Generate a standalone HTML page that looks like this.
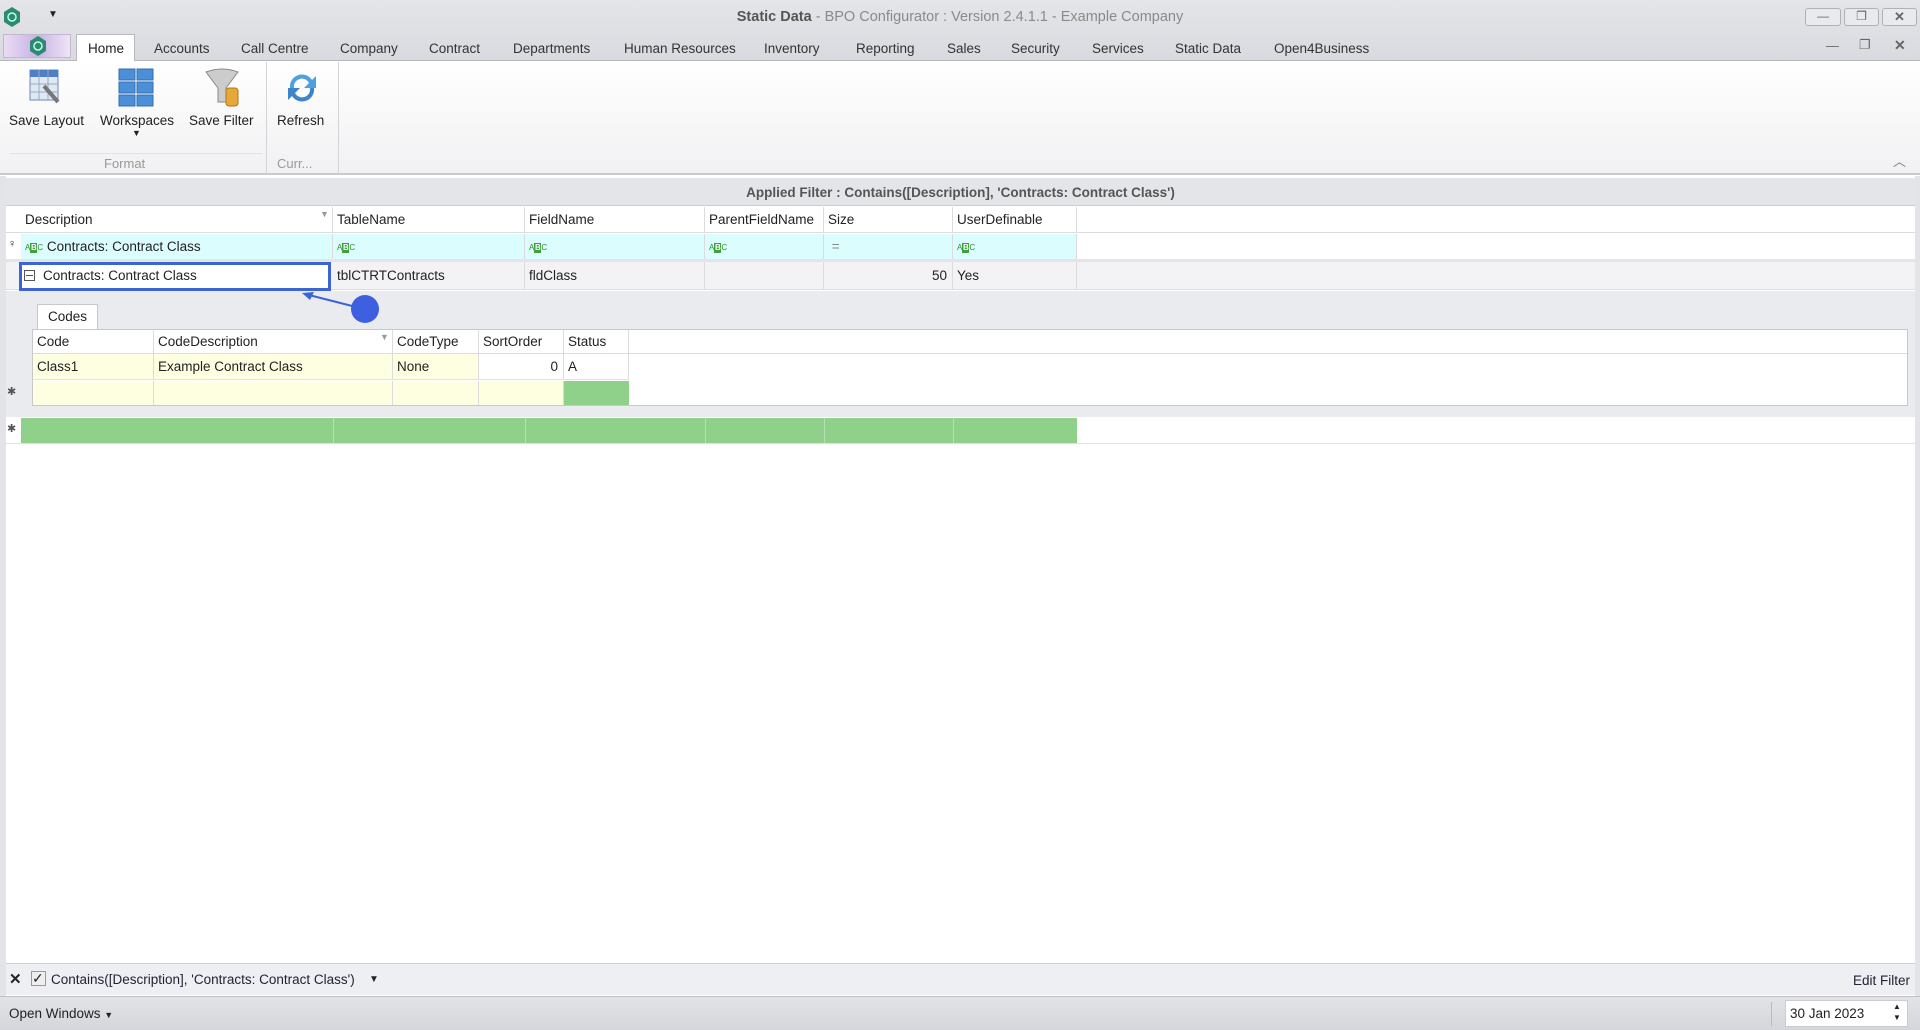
<!DOCTYPE html>
<html><head><meta charset="utf-8"><style>
*{box-sizing:border-box;margin:0;padding:0}
body{width:1920px;height:1030px;overflow:hidden;background:#fff;font-family:"Liberation Sans",sans-serif;font-size:13.5px;color:#222;position:relative}
.a{position:absolute}
.t{position:absolute;white-space:nowrap}
.cell{position:absolute;border-right:1px solid #dcdcdc;padding-left:4px;white-space:nowrap;overflow:hidden}
.abc{display:inline-block;font-size:8px;color:#2a8a2a;vertical-align:middle}
.abc b{display:inline-block;background:#3da13d;color:#fff;width:7px;height:10px;text-align:center;line-height:10px}
</style></head><body>
<div class="a" style="left:0;top:0;width:1920px;height:61px;background:linear-gradient(#e4e5e9,#d9dadf);border-bottom:1px solid #b8b9be"></div>
<svg class="a" style="left:2px;top:6px" width="20" height="22" viewBox="0 0 20 22"><polygon points="10,1 18,6 18,16 10,21 2,16 2,6" fill="#2d8a6e"/><circle cx="10" cy="11" r="4" fill="none" stroke="#bfe" stroke-width="1.5"/></svg>
<div class="t" style="left:48px;top:9px;font-size:10px">▼</div>
<div class="t" style="left:0;width:1920px;top:9px;text-align:center;font-size:14.5px;color:#8a8a8a"><b style="color:#555">Static Data</b> - BPO Configurator : Version 2.4.1.1 - Example Company</div>
<div class="a" style="left:1805px;top:8px;width:36px;height:18px;border:1px solid #b0b0b6;border-radius:3px;background:#e9eaee;text-align:center;font-size:12px;color:#666">—</div>
<div class="a" style="left:1844px;top:8px;width:35px;height:18px;border:1px solid #b0b0b6;border-radius:3px;background:#e9eaee;text-align:center;font-size:12px;color:#666">❐</div>
<div class="a" style="left:1882px;top:8px;width:35px;height:18px;border:1px solid #b0b0b6;border-radius:3px;background:#e9eaee;text-align:center;font-size:13px;font-weight:bold;color:#666">✕</div>
<div class="t" style="left:1826px;top:38px;color:#666;font-size:13px">—</div>
<div class="t" style="left:1859px;top:37px;color:#666;font-size:13px">❐</div>
<div class="t" style="left:1894px;top:37px;color:#666;font-size:14px;font-weight:bold">✕</div>
<div class="a" style="left:3px;top:34px;width:68px;height:24px;background:linear-gradient(90deg,#e9dcf3,#c9b2e6,#eee4f6);border:1px solid #c0b8cc"></div>
<svg class="a" style="left:28px;top:35px" width="20" height="22" viewBox="0 0 20 22"><polygon points="10,1 18,6 18,16 10,21 2,16 2,6" fill="#2d8a6e"/><circle cx="10" cy="11" r="4" fill="none" stroke="#bfe" stroke-width="1.5"/></svg>
<div class="a" style="left:76px;top:34px;width:59px;height:28px;background:#fff;border:1px solid #b8b9be;border-bottom:none"></div>
<div class="t" style="left:88px;top:41px">Home</div>
<div class="t" style="left:154px;top:41px;color:#333">Accounts</div>
<div class="t" style="left:241px;top:41px;color:#333">Call Centre</div>
<div class="t" style="left:340px;top:41px;color:#333">Company</div>
<div class="t" style="left:429px;top:41px;color:#333">Contract</div>
<div class="t" style="left:513px;top:41px;color:#333">Departments</div>
<div class="t" style="left:624px;top:41px;color:#333">Human Resources</div>
<div class="t" style="left:764px;top:41px;color:#333">Inventory</div>
<div class="t" style="left:856px;top:41px;color:#333">Reporting</div>
<div class="t" style="left:947px;top:41px;color:#333">Sales</div>
<div class="t" style="left:1011px;top:41px;color:#333">Security</div>
<div class="t" style="left:1092px;top:41px;color:#333">Services</div>
<div class="t" style="left:1175px;top:41px;color:#333">Static Data</div>
<div class="t" style="left:1274px;top:41px;color:#333">Open4Business</div>
<div class="a" style="left:0;top:61px;width:1920px;height:114px;background:linear-gradient(#fff,#f1f1f3);border-bottom:2px solid #c8c9ce"></div>
<div class="a" style="left:266px;top:62px;width:1px;height:112px;background:#d4d4d8"></div>
<div class="a" style="left:338px;top:62px;width:1px;height:112px;background:#d4d4d8"></div>
<svg class="a" style="left:28px;top:68px" width="38" height="40"><rect x="2" y="2" width="28" height="30" fill="#dfe8f5" stroke="#6a87b5"/><rect x="2" y="2" width="28" height="7" fill="#4f7fc4"/><line x1="11" y1="2" x2="11" y2="32" stroke="#9ab"/><line x1="20" y1="2" x2="20" y2="32" stroke="#9ab"/><line x1="2" y1="16" x2="30" y2="16" stroke="#9ab"/><line x1="2" y1="24" x2="30" y2="24" stroke="#9ab"/><path d="M16 18 l14 16" stroke="#777" stroke-width="4"/></svg>
<svg class="a" style="left:118px;top:68px" width="38" height="40"><g fill="#4d8fd6" stroke="#2f6db4"><rect x="1" y="1" width="16" height="11"/><rect x="19" y="1" width="16" height="11"/><rect x="1" y="14" width="16" height="11"/><rect x="19" y="14" width="16" height="11"/><rect x="1" y="27" width="16" height="11"/><rect x="19" y="27" width="16" height="11"/></g></svg>
<svg class="a" style="left:204px;top:68px" width="38" height="40"><path d="M2 4 Q18 -2 34 4 L22 20 L22 34 L14 34 L14 20 Z" fill="#ccc" stroke="#888"/><rect x="22" y="20" width="12" height="18" rx="3" fill="#e6a83a" stroke="#b47812"/></svg>
<svg class="a" style="left:282px;top:68px" width="40" height="40"><path d="M8 20 A12 12 0 0 1 30 12 L34 8 L34 20 L22 20 L27 15 A8 8 0 0 0 12 20 Z" fill="#4fa0e0"/><path d="M32 20 A12 12 0 0 1 10 28 L6 32 L6 20 L18 20 L13 25 A8 8 0 0 0 28 20 Z" fill="#3a86c8"/></svg>
<div class="t" style="left:9px;top:113px">Save Layout</div>
<div class="t" style="left:100px;top:113px">Workspaces</div>
<div class="t" style="left:132px;top:128px;font-size:9px">▼</div>
<div class="t" style="left:189px;top:113px">Save Filter</div>
<div class="t" style="left:277px;top:113px">Refresh</div>
<div class="a" style="left:10px;top:153px;width:252px;height:1px;background:#e2e2e6"></div>
<div class="t" style="left:104px;top:156px;color:#999;font-size:13px">Format</div>
<div class="t" style="left:277px;top:156px;color:#999;font-size:13px">Curr...</div>
<div class="t" style="left:1893px;top:151px;color:#777;font-size:13px">︿</div>
<div class="a" style="left:0;top:176px;width:6px;height:820px;background:#e3e4e8"></div>
<div class="a" style="left:1915px;top:176px;width:5px;height:820px;background:#e3e4e8"></div>
<div class="a" style="left:6px;top:178px;width:1909px;height:28px;background:#e4e5e9;border-bottom:1px solid #ccc"></div>
<div class="t" style="left:6px;width:1909px;top:185px;text-align:center;font-weight:bold;color:#555;font-size:13.5px">Applied Filter : Contains([Description], 'Contracts: Contract Class')</div>
<div class="a" style="left:6px;top:207px;width:1909px;height:26px;background:#fff;border-bottom:1px solid #dcdcdc"></div>
<div class="cell" style="left:21px;top:207px;width:312px;height:26px;line-height:26px">Description</div>
<div class="t" style="left:320px;top:209px;font-size:9px;color:#999">▼</div>
<div class="cell" style="left:333px;top:207px;width:192px;height:26px;line-height:26px">TableName</div>
<div class="cell" style="left:525px;top:207px;width:180px;height:26px;line-height:26px">FieldName</div>
<div class="cell" style="left:705px;top:207px;width:119px;height:26px;line-height:26px">ParentFieldName</div>
<div class="cell" style="left:824px;top:207px;width:129px;height:26px;line-height:26px">Size</div>
<div class="cell" style="left:953px;top:207px;width:124px;height:26px;line-height:26px">UserDefinable</div>
<div class="a" style="left:21px;top:234px;width:1056px;height:25px;background:#dcfdfd"></div>
<div class="a" style="left:6px;top:259px;width:1909px;height:3px;background:#e4e5e9"></div>
<div class="t" style="left:8px;top:238px;font-size:11px">♀</div>
<div class="cell" style="left:21px;top:234px;width:312px;height:25px;line-height:25px"><span class="abc">A<b>B</b>C</span> Contracts: Contract Class</div>
<div class="cell" style="left:333px;top:234px;width:192px;height:25px;line-height:25px"><span class="abc">A<b>B</b>C</span></div>
<div class="cell" style="left:525px;top:234px;width:180px;height:25px;line-height:25px"><span class="abc">A<b>B</b>C</span></div>
<div class="cell" style="left:705px;top:234px;width:119px;height:25px;line-height:25px"><span class="abc">A<b>B</b>C</span></div>
<div class="cell" style="left:824px;top:234px;width:129px;height:25px;line-height:25px;color:#888">&nbsp;=</div>
<div class="cell" style="left:953px;top:234px;width:124px;height:25px;line-height:25px"><span class="abc">A<b>B</b>C</span></div>
<div class="a" style="left:6px;top:262px;width:1909px;height:28px;background:#f3f3f5;border-bottom:1px solid #dcdcdc"></div>
<div class="a" style="left:19px;top:262px;width:312px;height:29px;background:#fff;border:3px solid #3c64d2"></div>
<div class="t" style="left:24px;top:270px;width:11px;height:11px;border:1px solid #555"></div>
<div class="a" style="left:26px;top:275px;width:7px;height:1px;background:#555"></div>
<div class="t" style="left:43px;top:268px">Contracts: Contract Class</div>
<div class="cell" style="left:333px;top:262px;width:192px;height:28px;line-height:28px">tblCTRTContracts</div>
<div class="cell" style="left:525px;top:262px;width:180px;height:28px;line-height:28px">fldClass</div>
<div class="cell" style="left:705px;top:262px;width:119px;height:28px"></div>
<div class="cell" style="left:824px;top:262px;width:129px;height:28px;line-height:28px;text-align:right;padding-right:5px">50</div>
<div class="cell" style="left:953px;top:262px;width:124px;height:28px;line-height:28px">Yes</div>
<div class="a" style="left:6px;top:291px;width:1909px;height:126px;background:#eaebee"></div>
<svg class="a" style="left:300px;top:288px" width="80" height="40"><line x1="5" y1="6" x2="60" y2="20" stroke="#3c64d2" stroke-width="2"/><polygon points="2,5 14,4 10,12" fill="#3c64d2"/><circle cx="65" cy="21" r="14" fill="#3d5fe0"/></svg>
<div class="a" style="left:37px;top:304px;width:61px;height:26px;background:#fff;border:1px solid #c8c8cc;border-bottom:none;text-align:center;line-height:24px">Codes</div>
<div class="a" style="left:32px;top:329px;width:1876px;height:77px;background:#fff;border:1px solid #c8c8cc"></div>
<div class="cell" style="left:33px;top:330px;width:121px;height:24px;line-height:24px;border-bottom:1px solid #dcdcdc">Code</div>
<div class="cell" style="left:154px;top:330px;width:239px;height:24px;line-height:24px;border-bottom:1px solid #dcdcdc">CodeDescription</div>
<div class="t" style="left:380px;top:332px;font-size:9px;color:#999">▼</div>
<div class="cell" style="left:393px;top:330px;width:86px;height:24px;line-height:24px;border-bottom:1px solid #dcdcdc">CodeType</div>
<div class="cell" style="left:479px;top:330px;width:85px;height:24px;line-height:24px;border-bottom:1px solid #dcdcdc">SortOrder</div>
<div class="cell" style="left:564px;top:330px;width:65px;height:24px;line-height:24px;border-bottom:1px solid #dcdcdc">Status</div>
<div class="a" style="left:629px;top:353px;width:1278px;height:1px;background:#dcdcdc"></div>
<div class="cell" style="left:33px;top:354px;width:121px;height:26px;line-height:26px;background:#fefee0;border-bottom:1px solid #e2e2e2">Class1</div>
<div class="cell" style="left:154px;top:354px;width:239px;height:26px;line-height:26px;background:#fefee0;border-bottom:1px solid #e2e2e2">Example Contract Class</div>
<div class="cell" style="left:393px;top:354px;width:86px;height:26px;line-height:26px;background:#fefee0;border-bottom:1px solid #e2e2e2">None</div>
<div class="cell" style="left:479px;top:354px;width:85px;height:26px;line-height:26px;text-align:right;padding-right:5px;border-bottom:1px solid #e2e2e2">0</div>
<div class="cell" style="left:564px;top:354px;width:65px;height:26px;line-height:26px;border-bottom:1px solid #e2e2e2">A</div>
<div class="cell" style="left:33px;top:381px;width:121px;height:24px;background:#fefee0"></div>
<div class="cell" style="left:154px;top:381px;width:239px;height:24px;background:#fefee0"></div>
<div class="cell" style="left:393px;top:381px;width:86px;height:24px;background:#fefee0"></div>
<div class="cell" style="left:479px;top:381px;width:85px;height:24px;background:#fefee0"></div>
<div class="a" style="left:564px;top:381px;width:65px;height:24px;background:#8fd18a"></div>
<div class="t" style="left:7px;top:385px;font-size:11px;color:#555">✱</div>
<div class="a" style="left:21px;top:418px;width:1056px;height:25px;background:#8fd18a"></div>
<div class="a" style="left:333px;top:418px;width:1px;height:25px;background:#b6dfb2"></div>
<div class="a" style="left:525px;top:418px;width:1px;height:25px;background:#b6dfb2"></div>
<div class="a" style="left:705px;top:418px;width:1px;height:25px;background:#b6dfb2"></div>
<div class="a" style="left:824px;top:418px;width:1px;height:25px;background:#b6dfb2"></div>
<div class="a" style="left:953px;top:418px;width:1px;height:25px;background:#b6dfb2"></div>
<div class="t" style="left:7px;top:422px;font-size:11px;color:#555">✱</div>
<div class="a" style="left:6px;top:443px;width:1909px;height:1px;background:#e0e0e0"></div>
<div class="a" style="left:6px;top:963px;width:1909px;height:32px;background:#eeeff2;border-top:1px solid #d0d0d4"></div>
<div class="t" style="left:9px;top:970px;font-weight:bold;font-size:15px">✕</div>
<div class="a" style="left:31px;top:971px;width:15px;height:15px;border:1px solid #999;background:#eee;font-size:14px;line-height:13px">✓</div>
<div class="t" style="left:51px;top:972px;font-size:13.5px;color:#223">Contains([Description], 'Contracts: Contract Class')</div>
<div class="t" style="left:369px;top:974px;font-size:10px">▼</div>
<div class="t" style="left:1853px;top:973px;font-size:13.5px;color:#223">Edit Filter</div>
<div class="a" style="left:0;top:996px;width:1920px;height:34px;background:linear-gradient(#e2e3e7,#d5d6db);border-top:1px solid #c0c0c4"></div>
<div class="t" style="left:9px;top:1006px;font-size:13.5px">Open Windows <span style="font-size:9px">▼</span></div>
<div class="a" style="left:1771px;top:1002px;width:1px;height:24px;background:#bbb"></div>
<div class="a" style="left:1785px;top:1000px;width:123px;height:27px;background:#fff;border:1px solid #ccc"></div>
<div class="t" style="left:1790px;top:1006px;font-size:13.5px">30 Jan 2023</div>
<div class="t" style="left:1893px;top:1001px;font-size:8px;line-height:11px">▲<br>▼</div>
</body></html>
